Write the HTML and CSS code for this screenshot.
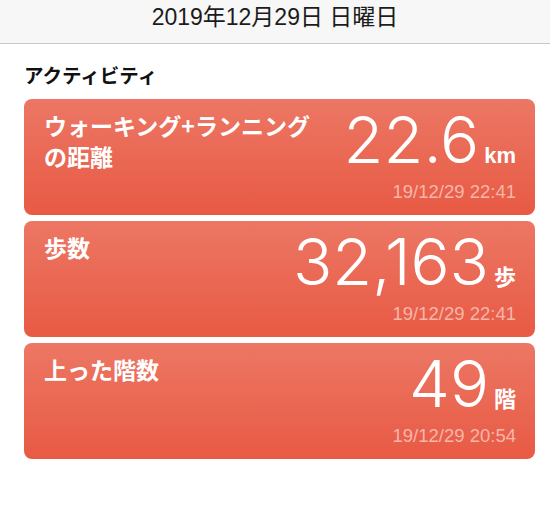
FILE: index.html
```html
<html lang="ja">
<head>
    <meta charset="UTF-8">
    <meta name="viewport" content="width=device-width, initial-scale=1.0">
    <title>アクティビティ</title>
    <link rel="stylesheet" href="styles.css">
</head>
<body>
    <header class="topbar">2019年12月29日 日曜日</header>
    <main class="content">
        <h2 class="section-title">アクティビティ</h2>
        <div class="card">
            <div class="card-title">
                <div>ウォーキング+ランニング</div>
                <div>の距離</div>
            </div>
            <div class="card-value">
                <div class="value-row"><span class="number">22.6</span><span class="unit">km</span></div>
                <div class="stamp">19/12/29 22:41</div>
            </div>
        </div>
        <div class="card">
            <div class="card-title">歩数</div>
            <div class="card-value">
                <div class="value-row"><span class="number">32,163</span><span class="unit">歩</span></div>
                <div class="stamp">19/12/29 22:41</div>
            </div>
        </div>
        <div class="card">
            <div class="card-title">上った階数</div>
            <div class="card-value">
                <div class="value-row"><span class="number">49</span><span class="unit">階</span></div>
                <div class="stamp">19/12/29 20:54</div>
            </div>
        </div>
    </main>
</body>
</html>
```

FILE: styles.css
```css
body {
    margin: 0;
    padding: 0;
    background-color: #fff;
    font-family: "Liberation Sans", "Noto Sans CJK JP", sans-serif;
    color: #111;
}
.topbar {
    height: 44px;
    box-sizing: border-box;
    padding-top: 2px;
    background-color: #f7f7f7;
    border-bottom: 1px solid #c9c9c9;
    text-align: center;
    font-size: 23px;
    line-height: 30px;
    color: #1c1c1c;
}
.content {
    padding: 0 15px 0 24px;
}
.section-title {
    margin: 17px 0 10px;
    font-family: "Noto Sans CJK JP", sans-serif;
    font-size: 19.5px;
    font-weight: bold;
    line-height: 28px;
    color: #111;
}
.card {
    display: flex;
    justify-content: space-between;
    height: 116px;
    box-sizing: border-box;
    margin-bottom: 6px;
    padding: 11px 19px 0 20px;
    border-radius: 8px;
    background: linear-gradient(#ec7764, #e85a44);
    color: #fff;
}
.card-title {
    font-family: "Noto Sans CJK JP", sans-serif;
    font-size: 23px;
    font-weight: bold;
    line-height: 31px;
}
.card-value {
    display: flex;
    flex-direction: column;
    align-items: flex-end;
}
.value-row {
    display: flex;
    align-items: baseline;
    gap: 5px;
}
.number {
    font-family: "Inter", sans-serif;
    font-weight: 300;
    font-size: 65px;
    line-height: 62px;
    margin-top: -1px;
}
.unit {
    font-family: "Liberation Sans", "Noto Sans CJK JP", sans-serif;
    font-weight: bold;
    font-size: 22px;
}
.stamp {
    margin-top: 10px;
    font-size: 18.5px;
    line-height: 22px;
    color: #f7b6aa;
}
```
